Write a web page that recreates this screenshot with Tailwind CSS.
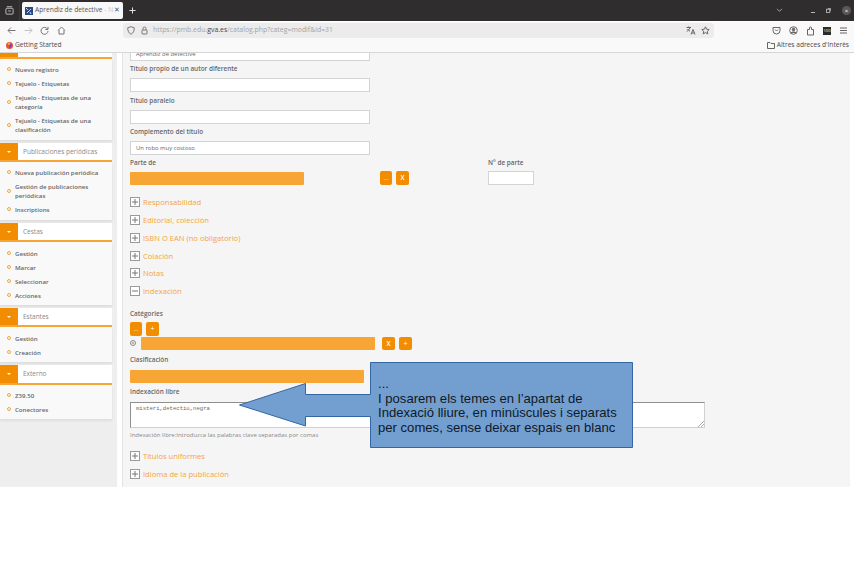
<!DOCTYPE html>
<html lang="en">
<head>
<meta charset="UTF-8">
<title>Aprendiz de detective</title>
<script src="https://cdn.jsdelivr.net/npm/@tailwindcss/browser@4"></script>
</head>
<body class="bg-white font-['Open_Sans',sans-serif]">
<div class="relative w-[854px] h-[586px] overflow-hidden bg-white">

  <!-- tab bar -->
  <div class="h-[21px] bg-[#2f2d2e] flex items-center text-white">
    <div class="w-[20px] h-full flex items-center justify-center border-r border-[#3c3a3b]">
      <svg width="9" height="9" viewBox="0 0 10 10" fill="none" stroke="#c8c8c8"><rect x="1" y="2.5" width="8" height="6.5" rx="1"/><path d="M2 .8h6M3.5 5.5h3"/></svg>
    </div>
    <div class="ml-[2px] w-[101px] h-[17px] bg-[#f8f8f8] rounded-[2px] flex items-center pl-[3px] text-[#555] text-[6.700px] whitespace-nowrap">
      <svg class="shrink-0" width="8" height="8" viewBox="0 0 8 8"><rect width="8" height="8" fill="#2b4a80"/><path d="M1 1l2 2M6 2L4 4M2 6l2-2M6 7L5 5" stroke="#cfd8e6"/></svg>
      <span class="ml-[2px] w-[79px]">Aprendiz de detective <span class="text-[#c4c4c4]">- N</span></span>
      <span class="text-[7px] text-[#555]">✕</span>
    </div>
    <svg class="ml-[6px]" width="7" height="7" viewBox="0 0 8 8" stroke="#e8e8e8" stroke-width="1.1"><path d="M4 .5v7M.5 4h7"/></svg>
    <div class="ml-auto flex items-center">
      <svg width="7" height="5" viewBox="0 0 8 6" fill="none" stroke="#b8b8b8"><path d="M1 1l3 3 3-3"/></svg>
      <div class="ml-[28px] w-[4px] h-px bg-[#b8b8b8] mt-[3px]"></div>
      <svg class="ml-[11px]" width="5" height="5" viewBox="0 0 6 6" fill="none" stroke="#b8b8b8"><rect x=".5" y="1.5" width="4" height="4"/><path d="M2 .5h3.500V4"/></svg>
      <div class="ml-[11px] mr-[3px] w-[9px] h-[9px] rounded-full bg-[#5a5859] flex items-center justify-center text-[6px] leading-none text-white">×</div>
    </div>
  </div>

  <!-- nav bar -->
  <div class="h-[17px] mt-px bg-[#f9f9f9] flex items-center">
    <div class="w-[123px] flex items-center pl-[7px] gap-[7.500px]">
      <svg width="9" height="9" viewBox="0 0 9 9" fill="none" stroke="#777"><path d="M8.500 4.500H1M4 1.500l-3 3 3 3"/></svg>
      <svg width="9" height="9" viewBox="0 0 9 9" fill="none" stroke="#c4c4c4"><path d="M.5 4.500H8M5 1.500l3 3-3 3"/></svg>
      <svg width="9" height="9" viewBox="0 0 9 9" fill="none" stroke="#777"><path d="M7.500 3A3.500 3.500 0 1 0 8 5"/><path d="M8 .8V3.500H5.300" /></svg>
      <svg width="9" height="9" viewBox="0 0 9 9" fill="none" stroke="#777"><path d="M1 4.500L4.500 1 8 4.500M2 4v4h5V4"/></svg>
    </div>
    <div class="w-[591px] h-[15px] bg-[#ececec] rounded-[3px] flex items-center pl-[4px] pr-[4px] text-[6.900px] text-[#a4a4a4] whitespace-nowrap">
      <svg width="8" height="9" viewBox="0 0 8 9" fill="none" stroke="#777"><path d="M4 .7l3.300 1.100c0 3-1 5.200-3.300 6.500C1.700 7 .7 4.800.7 1.800z"/></svg>
      <svg class="ml-[6px]" width="7" height="9" viewBox="0 0 7 9" fill="none" stroke="#777"><rect x="1" y="4" width="5" height="4" rx=".5"/><path d="M2 4V2.500a1.500 1.500 0 0 1 3 0V4"/></svg>
      <span class="ml-[5px]">https://pmb.edu.<span class="text-[#444]">gva.es</span>/catalog.php?categ=modif&amp;id=31</span>
      <svg class="ml-auto" width="10" height="9" viewBox="0 0 10 9" fill="none" stroke="#666"><path d="M.5 1.500h4.500M2.700.5v1M4 1.500C3.500 3.500 2 4.800.7 5.300M1.500 3c.5 1 1.500 1.800 2.500 2.200M5 8.500L7 3.500l2 5M5.800 7h2.500"/></svg>
      <svg class="ml-[5px]" width="9" height="9" viewBox="0 0 9 9" fill="none" stroke="#666"><path d="M4.500.8l1.100 2.400 2.600.3-1.900 1.800.5 2.600-2.300-1.300-2.300 1.300.5-2.600L.8 3.500l2.600-.3z"/></svg>
    </div>
    <div class="flex-1 flex items-center justify-end pr-[6px] gap-[8px]">
      <svg width="9" height="9" viewBox="0 0 9 9" fill="none" stroke="#666"><path d="M1 1.500h7v3a3.500 3.500 0 0 1-7 0z"/><path d="M3 3.500l1.500 1.500L6 3.500"/></svg>
      <svg width="9" height="9" viewBox="0 0 9 9" fill="none" stroke="#666"><circle cx="4.500" cy="4.500" r="3.800"/><circle cx="4.500" cy="3.500" r="1.300" fill="#666"/><path d="M2 7c1-1.500 4-1.500 5 0" fill="#666"/></svg>
      <svg width="9" height="10" viewBox="0 0 9 10" fill="none" stroke="#666"><path d="M1.500 9V3.500h2V2a1 1 0 0 1 2 0v1.500h2V9z"/></svg>
      <div class="w-[8px] h-[8px] bg-[#2a2a2a] text-white text-[4px] leading-[8px] text-center">100</div>
      <svg width="9" height="7" viewBox="0 0 9 7" stroke="#666"><path d="M1 1h7M1 3.500h7M1 6h7"/></svg>
    </div>
  </div>

  <!-- bookmarks bar -->
  <div class="h-[14px] bg-[#f9f9f9] border-b border-[#d6d6d6] flex items-center pb-[1px] pl-[6px] pr-[5px] text-[6.600px] text-[#4a4a4a]">
    <svg width="7" height="7" viewBox="0 0 8 8"><circle cx="4" cy="4" r="4" fill="#e8503a"/><path d="M4 1.500a2.500 2.500 0 0 1 0 5z" fill="#7a3fb0"/><circle cx="3.500" cy="2" r="1.500" fill="#f9a825"/></svg>
    <span class="ml-[2px]">Getting Started</span>
    <svg class="ml-auto" width="8" height="7" viewBox="0 0 8 7" fill="none" stroke="#666"><path d="M.5 6.500v-6h2.500l1 1h3.500v5z"/></svg>
    <span class="ml-[2px]">Altres adreces d'Interès</span>
  </div>

  <!-- page -->
  <div class="h-[434px] flex bg-white overflow-hidden">

    <!-- sidebar -->
    <aside class="w-[117px] shrink-0 bg-[#efeeee] text-[#666] overflow-hidden">
      <div class="w-[112px]">
        <div class="h-[6px] flex border-b-2 border-[#f7a535] bg-white"><div class="w-[18px] bg-[#f28c00]"></div></div>

        <ul class="bg-[#f9f9f9] shadow-[0_2px_2px_#dddddd] pt-[3px] h-[81px] text-[6.100px] font-semibold leading-[9px]">
          <li class="h-[14px] flex items-center"><i class="ml-[7px] mr-[4px] w-[4px] h-[4px] shrink-0 rounded-full border border-[#f2a63c]"></i>Nuevo registro</li>
          <li class="h-[14px] flex items-center"><i class="ml-[7px] mr-[4px] w-[4px] h-[4px] shrink-0 rounded-full border border-[#f2a63c]"></i>Tejuelo - Etiquetas</li>
          <li class="h-[23px] flex items-center"><i class="ml-[7px] mr-[4px] w-[4px] h-[4px] shrink-0 rounded-full border border-[#f2a63c]"></i><span>Tejuelo - Etiquetas de una categoría</span></li>
          <li class="h-[23px] flex items-center"><i class="ml-[7px] mr-[4px] w-[4px] h-[4px] shrink-0 rounded-full border border-[#f2a63c]"></i><span>Tejuelo - Etiquetas de una clasificación</span></li>
        </ul>

        <div class="mt-[3px] h-[19px] flex bg-white border-b-2 border-[#f7a535]">
          <div class="w-[18px] bg-[#f28c00] flex items-center justify-center"><i class="border-x-[2px] border-x-transparent border-t-[2px] border-t-white"></i></div>
          <span class="pl-[5px] text-[6.500px] leading-[18px] text-[#888]">Publicaciones periódicas</span>
        </div>
        <ul class="bg-[#f9f9f9] shadow-[0_2px_2px_#dddddd] pt-[3px] h-[58px] text-[6.100px] font-semibold leading-[9px]">
          <li class="h-[14px] flex items-center"><i class="ml-[7px] mr-[4px] w-[4px] h-[4px] shrink-0 rounded-full border border-[#f2a63c]"></i>Nueva publicación periódica</li>
          <li class="h-[23px] flex items-center"><i class="ml-[7px] mr-[4px] w-[4px] h-[4px] shrink-0 rounded-full border border-[#f2a63c]"></i><span>Gestión de publicaciones periódicas</span></li>
          <li class="h-[14px] flex items-center"><i class="ml-[7px] mr-[4px] w-[4px] h-[4px] shrink-0 rounded-full border border-[#f2a63c]"></i>Inscriptions</li>
        </ul>

        <div class="mt-[3px] h-[19px] flex bg-white border-b-2 border-[#f7a535]">
          <div class="w-[18px] bg-[#f28c00] flex items-center justify-center"><i class="border-x-[2px] border-x-transparent border-t-[2px] border-t-white"></i></div>
          <span class="pl-[5px] text-[6.500px] leading-[18px] text-[#888]">Cestas</span>
        </div>
        <ul class="bg-[#f9f9f9] shadow-[0_2px_2px_#dddddd] pt-[4px] h-[63px] text-[6.100px] font-semibold leading-[9px]">
          <li class="h-[14px] flex items-center"><i class="ml-[7px] mr-[4px] w-[4px] h-[4px] shrink-0 rounded-full border border-[#f2a63c]"></i>Gestión</li>
          <li class="h-[14px] flex items-center"><i class="ml-[7px] mr-[4px] w-[4px] h-[4px] shrink-0 rounded-full border border-[#f2a63c]"></i>Marcar</li>
          <li class="h-[14px] flex items-center"><i class="ml-[7px] mr-[4px] w-[4px] h-[4px] shrink-0 rounded-full border border-[#f2a63c]"></i>Seleccionar</li>
          <li class="h-[14px] flex items-center"><i class="ml-[7px] mr-[4px] w-[4px] h-[4px] shrink-0 rounded-full border border-[#f2a63c]"></i>Acciones</li>
        </ul>

        <div class="mt-[3px] h-[19px] flex bg-white border-b-2 border-[#f7a535]">
          <div class="w-[18px] bg-[#f28c00] flex items-center justify-center"><i class="border-x-[2px] border-x-transparent border-t-[2px] border-t-white"></i></div>
          <span class="pl-[5px] text-[6.500px] leading-[18px] text-[#888]">Estantes</span>
        </div>
        <ul class="bg-[#f9f9f9] shadow-[0_2px_2px_#dddddd] pt-[4px] h-[35px] text-[6.100px] font-semibold leading-[9px]">
          <li class="h-[14px] flex items-center"><i class="ml-[7px] mr-[4px] w-[4px] h-[4px] shrink-0 rounded-full border border-[#f2a63c]"></i>Gestión</li>
          <li class="h-[14px] flex items-center"><i class="ml-[7px] mr-[4px] w-[4px] h-[4px] shrink-0 rounded-full border border-[#f2a63c]"></i>Creación</li>
        </ul>

        <div class="mt-[3px] h-[20px] flex bg-white border-b-2 border-[#f7a535]">
          <div class="w-[18px] bg-[#f28c00] flex items-center justify-center"><i class="border-x-[2px] border-x-transparent border-t-[2px] border-t-white"></i></div>
          <span class="pl-[5px] text-[6.500px] leading-[18px] text-[#888]">Externo</span>
        </div>
        <ul class="bg-[#f9f9f9] shadow-[0_2px_2px_#dddddd] pt-[3px] h-[34px] text-[6.100px] font-semibold leading-[9px]">
          <li class="h-[14px] flex items-center"><i class="ml-[7px] mr-[4px] w-[4px] h-[4px] shrink-0 rounded-full border border-[#f2a63c]"></i>Z39.50</li>
          <li class="h-[14px] flex items-center"><i class="ml-[7px] mr-[4px] w-[4px] h-[4px] shrink-0 rounded-full border border-[#f2a63c]"></i>Conectores</li>
        </ul>
      </div>
    </aside>

    <!-- form -->
    <main class="ml-[5px] w-[728px] bg-[#f5f5f5] border-l border-[#e4e4e4] pl-[7px] text-[#666] text-[6.400px]">
      <div class="w-[240px] h-[9px] -mt-px bg-white border border-[#d4d4d4] px-[5px] flex items-end text-[5.900px] leading-[8px]"><span class="mb-[2px]">Aprendiz de detective</span></div>

      <div class="mt-[2px] h-[12px] leading-[12px] font-semibold">Título propio de un autor diferente</div>
      <div class="mt-[3px] w-[240px] h-[14px] bg-white border border-[#d4d4d4]"></div>
      <div class="mt-[3px] h-[12px] leading-[12px] font-semibold">Título paralelo</div>
      <div class="mt-[3px] w-[240px] h-[14px] bg-white border border-[#d4d4d4]"></div>
      <div class="mt-[2px] h-[12px] leading-[12px] font-semibold">Complemento del título</div>
      <div class="mt-[3px] w-[240px] h-[14px] bg-white border border-[#d4d4d4] px-[5px] text-[5.900px] leading-[13px]">Un robo muy costoso</div>

      <div class="mt-[2px] flex">
        <div class="w-[358px]">
          <div class="h-[12px] leading-[12px] font-semibold">Parte de</div>
          <div class="flex items-end mt-[2px]">
            <div class="w-[174px] h-[13px] bg-[#f7a535] rounded-[1px]"></div>
            <div class="ml-[76px] w-[12px] h-[14px] bg-[#f28c00] rounded-[2px] text-white text-center text-[6px] leading-[15px]">...</div>
            <div class="ml-[4px] w-[13px] h-[14px] bg-[#f28c00] rounded-[2px] text-white text-center text-[6.500px] leading-[14px] font-semibold">X</div>
          </div>
        </div>
        <div>
          <div class="h-[12px] leading-[12px] font-semibold">N° de parte</div>
          <div class="mt-[2px] w-[46px] h-[14px] bg-white border border-[#d4d4d4]"></div>
        </div>
      </div>

      <div class="mt-[8.400px] flex flex-col text-[7.600px] leading-[12px] text-[#f5a33c]">
        <div class="h-[17.800px] flex items-center gap-[3px]"><svg width="10" height="10" viewBox="0 0 10 10" fill="#fff" stroke="#9a9a9a"><rect x=".5" y=".5" width="9" height="9"/><path d="M2 5h6M5 2v6" fill="none" stroke="#777"/></svg>Responsabilidad</div>
        <div class="h-[17.800px] flex items-center gap-[3px]"><svg width="10" height="10" viewBox="0 0 10 10" fill="#fff" stroke="#9a9a9a"><rect x=".5" y=".5" width="9" height="9"/><path d="M2 5h6M5 2v6" fill="none" stroke="#777"/></svg>Editorial, colección</div>
        <div class="h-[17.800px] flex items-center gap-[3px]"><svg width="10" height="10" viewBox="0 0 10 10" fill="#fff" stroke="#9a9a9a"><rect x=".5" y=".5" width="9" height="9"/><path d="M2 5h6M5 2v6" fill="none" stroke="#777"/></svg>ISBN O EAN (no obligatorio)</div>
        <div class="h-[17.800px] flex items-center gap-[3px]"><svg width="10" height="10" viewBox="0 0 10 10" fill="#fff" stroke="#9a9a9a"><rect x=".5" y=".5" width="9" height="9"/><path d="M2 5h6M5 2v6" fill="none" stroke="#777"/></svg>Colación</div>
        <div class="h-[17.800px] flex items-center gap-[3px]"><svg width="10" height="10" viewBox="0 0 10 10" fill="#fff" stroke="#9a9a9a"><rect x=".5" y=".5" width="9" height="9"/><path d="M2 5h6M5 2v6" fill="none" stroke="#777"/></svg>Notas</div>
        <div class="h-[17.800px] flex items-center gap-[3px]"><svg width="10" height="10" viewBox="0 0 10 10" fill="#fff" stroke="#9a9a9a"><rect x=".5" y=".5" width="9" height="9"/><path d="M2 5h6" fill="none" stroke="#777"/></svg>Indexación</div>
      </div>

      <div class="mt-[8px] h-[12px] leading-[12px] font-semibold">Catégories</div>
      <div class="mt-[2px] flex gap-[4px]">
        <div class="w-[12px] h-[14px] bg-[#f28c00] rounded-[2px] text-white text-center text-[6px] leading-[15px]">...</div>
        <div class="w-[13px] h-[14px] bg-[#f28c00] rounded-[2px] text-white text-center text-[7px] leading-[14px]">+</div>
      </div>
      <div class="mt-[1px] flex items-center">
        <svg width="6" height="6" viewBox="0 0 6 6" fill="none" stroke="#888" class="mb-[2px]"><circle cx="3" cy="3" r="2.500"/><path d="M2 3h2M3 2v2" stroke-width=".7"/></svg>
        <div class="ml-[5px] w-[234px] h-[13px] bg-[#f7a535] rounded-[1px]"></div>
        <div class="ml-[7px] w-[13px] h-[13px] bg-[#f28c00] rounded-[2px] text-white text-center text-[6.500px] leading-[13px] font-semibold">X</div>
        <div class="ml-[4px] w-[13px] h-[13px] bg-[#f28c00] rounded-[2px] text-white text-center text-[7px] leading-[13px]">+</div>
      </div>

      <div class="mt-[4px] h-[12px] leading-[12px] font-semibold">Clasificación</div>
      <div class="mt-[4px] w-[234px] h-[13px] bg-[#f7a535] rounded-[1px]"></div>
      <div class="mt-[3px] h-[12px] leading-[12px] font-semibold">Indexación libre</div>
      <div class="relative mt-[4px] w-[575px] h-[26px] bg-white border border-[#8f8f8f] border-b-[#d0d0d0] border-r-[#d0d0d0] px-[5px] pt-[1px] font-['Liberation_Mono',monospace] text-[5.600px] leading-[9px]">misteri,detectiu,negra
        <svg class="absolute right-0 bottom-0" width="6" height="6" viewBox="0 0 6 6" stroke="#aaa"><path d="M6 0L0 6M6 3L3 6"/></svg>
      </div>
      <div class="mt-[3px] h-[9px] leading-[9px] text-[6px] text-[#888]">Indexación libre:Introduzca las palabras clave separadas por comas</div>

      <div class="mt-[7px] flex flex-col text-[7.600px] leading-[12px] text-[#f5a33c]">
        <div class="h-[17.800px] flex items-center gap-[3px]"><svg width="10" height="10" viewBox="0 0 10 10" fill="#fff" stroke="#9a9a9a"><rect x=".5" y=".5" width="9" height="9"/><path d="M2 5h6M5 2v6" fill="none" stroke="#777"/></svg>Títulos uniformes</div>
        <div class="h-[17.800px] flex items-center gap-[3px]"><svg width="10" height="10" viewBox="0 0 10 10" fill="#fff" stroke="#9a9a9a"><rect x=".5" y=".5" width="9" height="9"/><path d="M2 5h6M5 2v6" fill="none" stroke="#777"/></svg>Idioma de la publicación</div>
      </div>
    </main>
  </div>

  <!-- callout annotation over the page -->
  <svg class="absolute left-[238px] top-[361px]" width="397" height="89" viewBox="238 361 397 89">
    <path d="M370.500 362.500H632.500V447.500H370.500V416.500H305.500V426L239.500 405L305.500 383.500V394.500H370.500Z" fill="#729fcf" stroke="#3465a4"/>
  </svg>
  <div class="absolute left-[378px] top-[377px] w-[250px] font-['Liberation_Sans',sans-serif] text-[13.100px] leading-[14.500px] text-[#111827] whitespace-nowrap">
    <p>...</p>
    <p>I posarem els temes en l’apartat de</p>
    <p>Indexació lliure, en minúscules i separats</p>
    <p>per comes, sense deixar espais en blanc</p>
  </div>
</div>
</body>
</html>
